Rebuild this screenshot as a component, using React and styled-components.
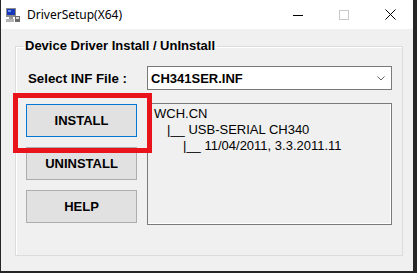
import React from 'react';
import styled, { createGlobalStyle } from 'styled-components';

const GlobalStyle = createGlobalStyle`
  html, body {
    margin: 0;
    padding: 0;
    background: #262626;
  }
  body {
    font-family: "Liberation Sans", Arial, sans-serif;
  }
`;

const Desktop = styled.div`
  width: 417px;
  height: 273px;
  padding-left: 1px;
  box-sizing: border-box;
`;

const Window = styled.div`
  width: 412px;
  height: 271px;
  background: #f0f0f0;
  display: flex;
  flex-direction: column;
`;

const TitleBar = styled.div`
  height: 29px;
  background: #fff;
  display: flex;
  align-items: center;
  flex-shrink: 0;
`;

const AppIcon = styled.svg`
  width: 16px;
  height: 16px;
  margin-left: 4px;
  margin-right: 6px;
`;

const Title = styled.span`
  font-family: "Noto Sans", "Open Sans", sans-serif;
  font-size: 12px;
  color: #000;
  flex: 1;
`;

const Caption = styled.div`
  width: 46px;
  height: 29px;
  display: flex;
  align-items: center;
  justify-content: center;
`;

const Group = styled.fieldset`
  margin: 10px 10px 0 14px;
  padding: 13px 10px 0 10px;
  height: 217px;
  box-sizing: border-box;
  border: 1px solid #dcdcdc;
  box-shadow: inset 1px 1px 0 #fff;
  min-width: 0;
`;

const Legend = styled.legend`
  font-size: 13px;
  font-weight: bold;
  line-height: 14px;
  padding: 0 2px;
  margin-left: -3px;
  color: #000;
`;

const FileRow = styled.div`
  display: flex;
  align-items: center;
  justify-content: space-between;
`;

const Label = styled.span`
  font-size: 13.3px;
  font-weight: bold;
  padding-left: 2px;
  color: #000;
`;

const Combo = styled.div`
  width: 245px;
  height: 24px;
  box-sizing: border-box;
  border: 1px solid #7a7a7a;
  background: #fff;
  display: flex;
  align-items: center;
  justify-content: space-between;
  padding: 0 6px 0 3px;
  font-size: 13px;
  font-weight: bold;
  color: #000;
`;

const Body = styled.div`
  display: flex;
  justify-content: space-between;
  margin-top: 13px;
`;

const ButtonColumn = styled.div`
  display: flex;
  flex-direction: column;
  gap: 10px;
  padding-top: 1px;
`;

const Button = styled.div`
  position: relative;
  width: 111px;
  height: 33px;
  box-sizing: border-box;
  background: #e1e1e1;
  border: 1px solid ${p => (p.$focused ? '#0078d7' : '#adadad')};
  display: flex;
  align-items: center;
  justify-content: center;
  font-size: 13px;
  font-weight: bold;
  color: #000;
  z-index: ${p => (p.$focused ? 2 : 1)};
`;

const Highlight = styled.span`
  position: absolute;
  top: -12px;
  left: -14px;
  right: -16px;
  bottom: -17px;
  border: 5px solid #e8131b;
  pointer-events: none;
`;

const InfoBox = styled.div`
  width: 245px;
  height: 122px;
  box-sizing: border-box;
  border: 1px solid #7a7a7a;
  box-shadow: inset -1px -1px 0 #fff;
  padding: 2px 0 0 6px;
  font-size: 13px;
  line-height: 16px;
  color: #000;
`;

const InfoLine = styled.div`
  padding-left: ${p => p.$indent}px;
  white-space: pre;
`;

const App = () => {
  return (
    <Desktop>
      <GlobalStyle />
      <Window>
        <TitleBar>
          <AppIcon viewBox="0 0 16 16">
            <rect x="1" y="1" width="10" height="9" fill="#8c8c8c" />
            <rect x="2" y="2" width="8" height="6" fill="#1537b8" />
            <rect x="3" y="3" width="3" height="2" fill="#6f8df0" />
            <rect x="4" y="10" width="4" height="2" fill="#9a9a9a" />
            <rect x="1" y="12" width="8" height="3" fill="#b5b5b5" />
            <rect x="10" y="9" width="5" height="6" fill="#6a6a6a" />
            <rect x="11" y="10" width="3" height="2" fill="#d8d8d8" />
          </AppIcon>
          <Title>DriverSetup(X64)</Title>
          <Caption>
            <svg width="10" height="10" viewBox="0 0 10 10">
              <line x1="0" y1="5.5" x2="10" y2="5.5" stroke="#000" strokeWidth="1" />
            </svg>
          </Caption>
          <Caption>
            <svg width="10" height="10" viewBox="0 0 10 10">
              <rect x="0.5" y="0.5" width="9" height="9" fill="none" stroke="#c8c8c8" strokeWidth="1" />
            </svg>
          </Caption>
          <Caption>
            <svg width="11" height="11" viewBox="0 0 11 11">
              <path d="M0.5 0.5 L10.5 10.5 M10.5 0.5 L0.5 10.5" stroke="#000" strokeWidth="1" />
            </svg>
          </Caption>
        </TitleBar>

        <Group>
          <Legend>Device Driver Install / UnInstall</Legend>
          <FileRow>
            <Label>Select INF File :</Label>
            <Combo>
              <span>CH341SER.INF</span>
              <svg width="8" height="5" viewBox="0 0 8 5">
                <path d="M0.5 0.5 L4 4 L7.5 0.5" fill="none" stroke="#606060" strokeWidth="1" />
              </svg>
            </Combo>
          </FileRow>
          <Body>
            <ButtonColumn>
              <Button $focused>
                INSTALL
                <Highlight />
              </Button>
              <Button>UNINSTALL</Button>
              <Button>HELP</Button>
            </ButtonColumn>
            <InfoBox>
              <InfoLine $indent={0}>WCH.CN</InfoLine>
              <InfoLine $indent={13}>|__ USB-SERIAL CH340</InfoLine>
              <InfoLine $indent={29}>|__ 11/04/2011, 3.3.2011.11</InfoLine>
            </InfoBox>
          </Body>
        </Group>
      </Window>
    </Desktop>
  );
};

export default App;
